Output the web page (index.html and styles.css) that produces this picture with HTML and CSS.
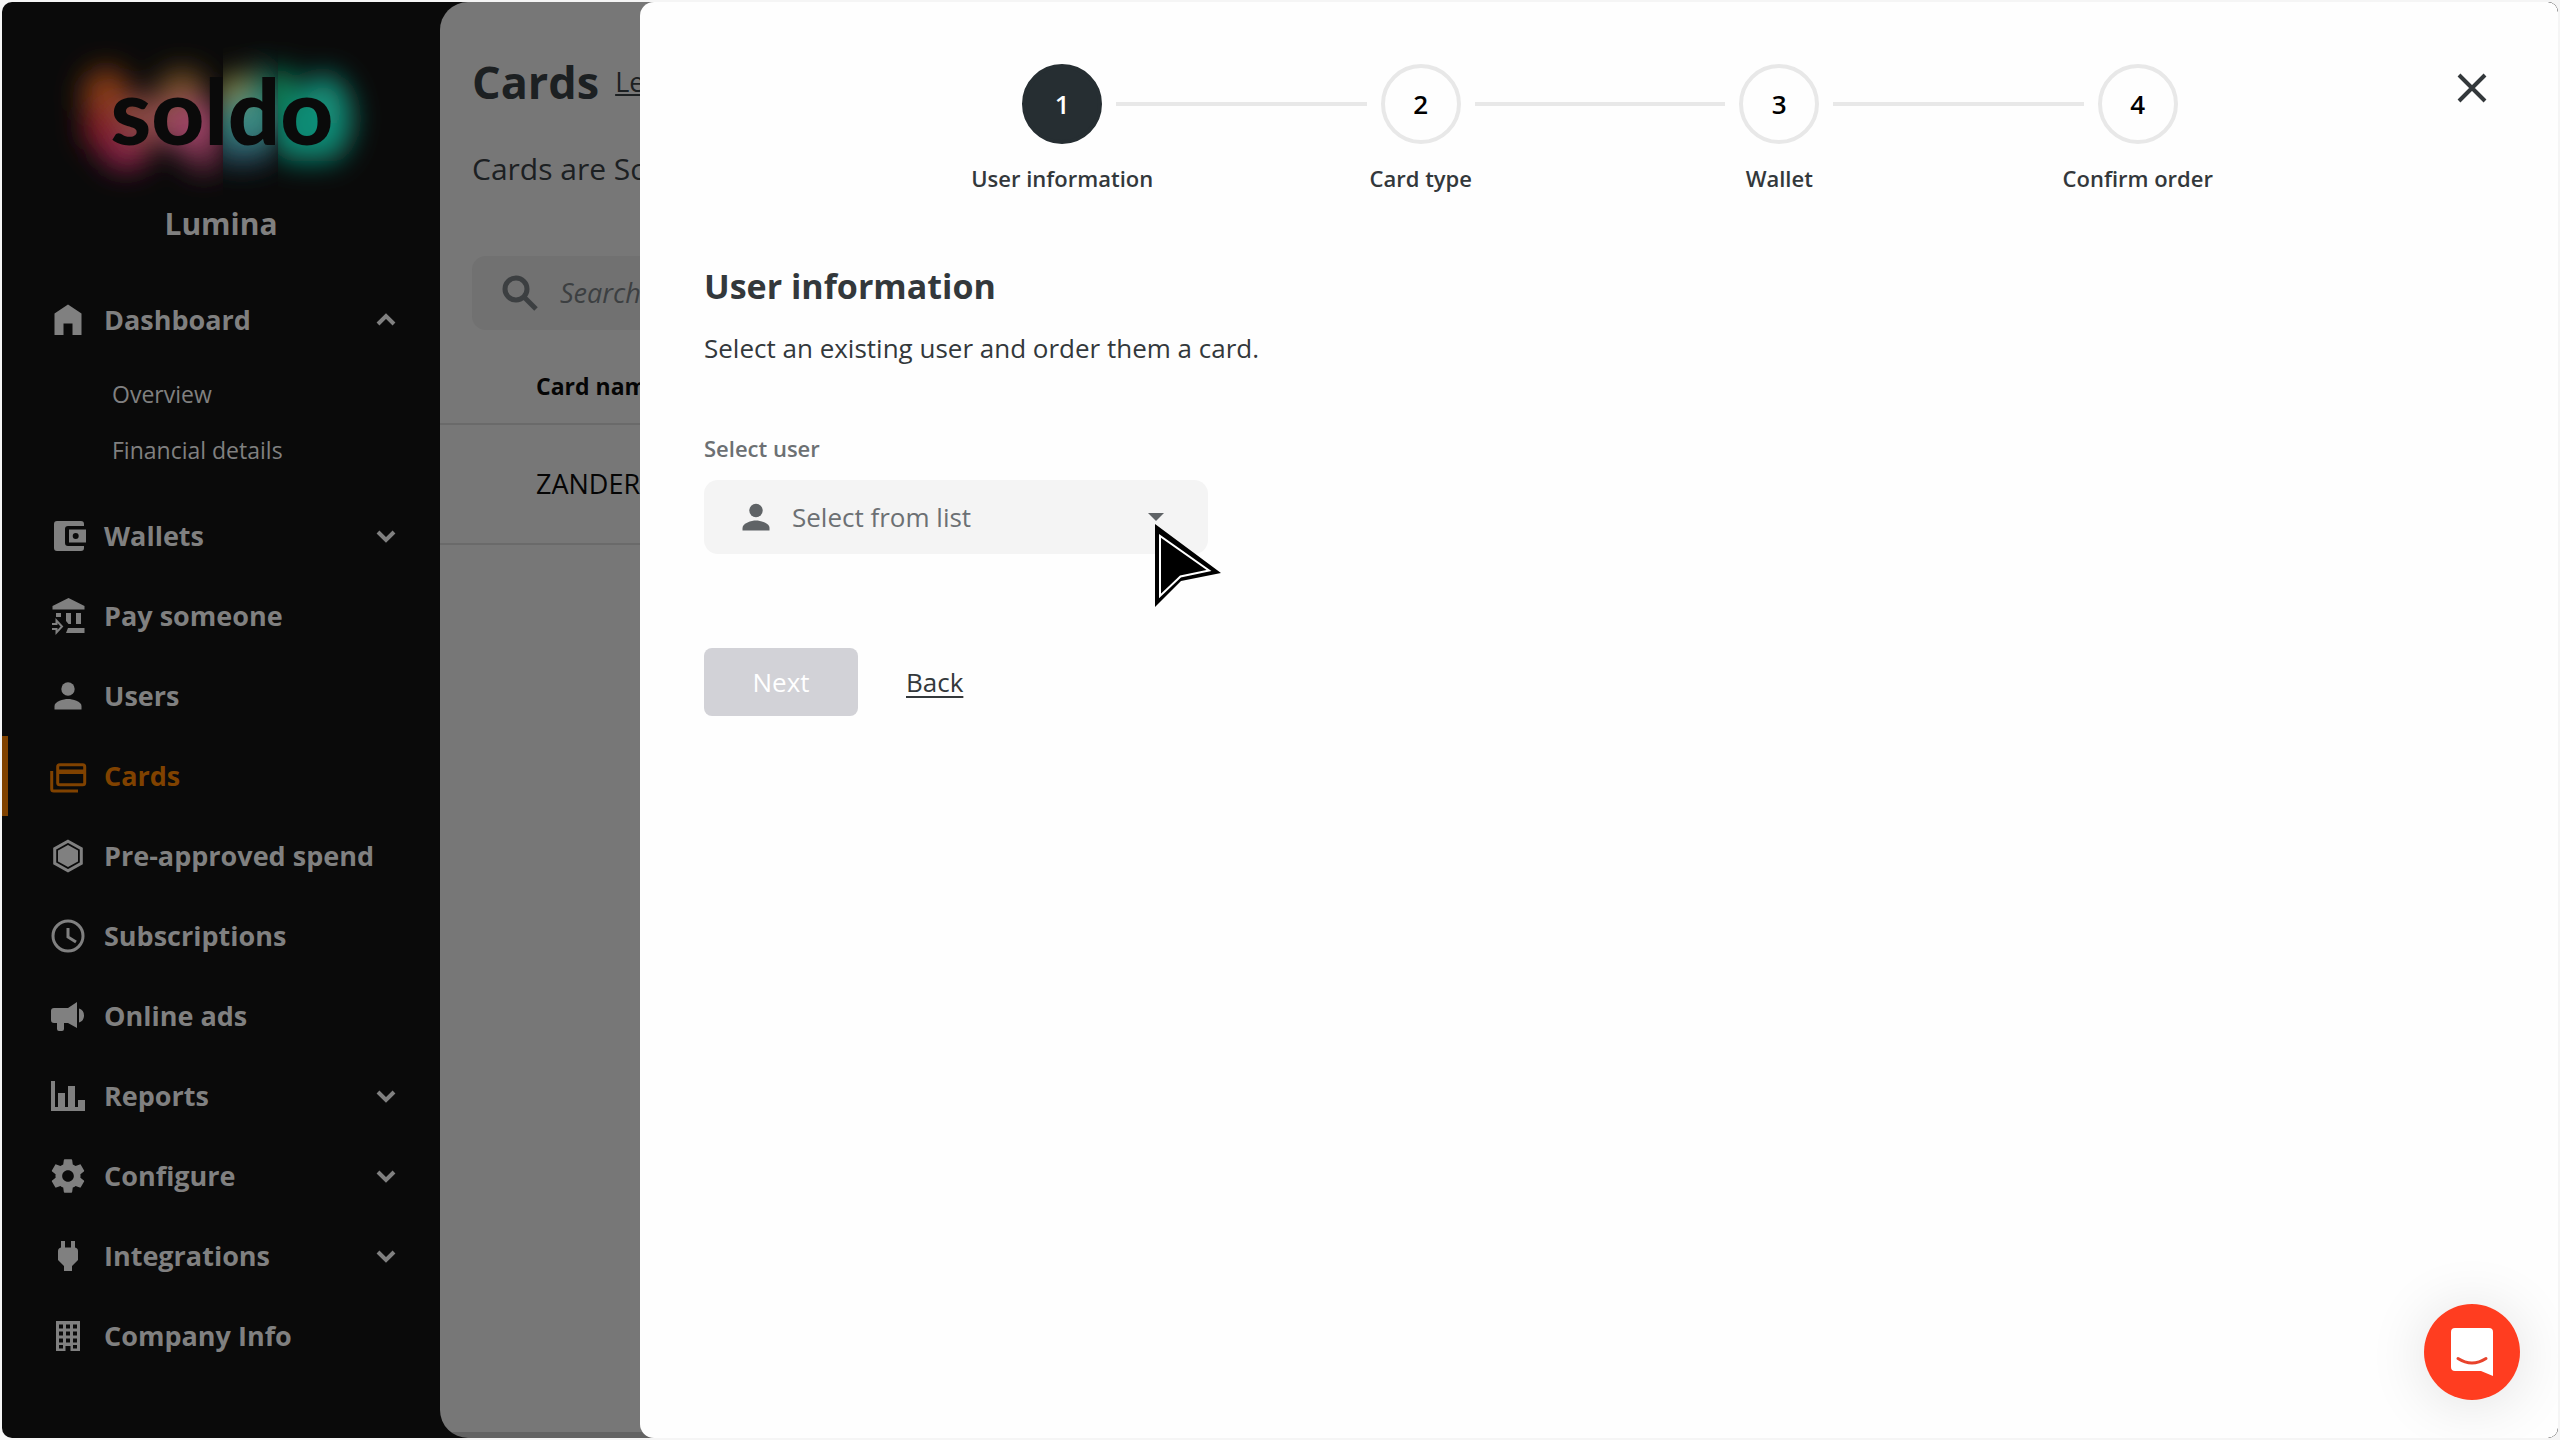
FILE: index.html
```
<!DOCTYPE html>
<html lang="en">
<head>
<meta charset="utf-8">
<title>Soldo – Cards</title>
<link rel="stylesheet" href="styles.css">
</head>
<body>
<div class="app">
  <aside class="sidebar">
    <svg class="logo" viewBox="0 0 438 200" role="img" aria-label="Soldo">
      <defs>
        <filter id="glow" x="-60%" y="-60%" width="220%" height="220%"><feGaussianBlur stdDeviation="14"/></filter>
        <clipPath id="left"><rect x="0" y="0" width="221" height="200"/></clipPath>
        <clipPath id="mid"><rect x="221" y="0" width="55" height="200"/></clipPath>
        <clipPath id="right"><rect x="276" y="0" width="162" height="200"/></clipPath>
      </defs>
      <g clip-path="url(#left)"><g filter="url(#glow)">
        <ellipse cx="104" cy="94" rx="24" ry="28" fill="#8a3c14"/>
        <ellipse cx="98" cy="126" rx="16" ry="22" fill="#8e1f2c"/>
        <ellipse cx="124" cy="150" rx="24" ry="18" fill="#8c2448"/>
        <ellipse cx="180" cy="88" rx="24" ry="20" fill="#7a5228"/>
        <ellipse cx="146" cy="118" rx="30" ry="24" fill="#8a4a44"/>
        <ellipse cx="192" cy="126" rx="28" ry="28" fill="#a04468"/>
        <ellipse cx="202" cy="154" rx="20" ry="16" fill="#6c2c44"/>
      </g></g>
      <g clip-path="url(#mid)"><g filter="url(#glow)">
        <ellipse cx="234" cy="94" rx="20" ry="22" fill="#8c8840"/>
        <ellipse cx="264" cy="98" rx="22" ry="34" fill="#127058"/>
        <ellipse cx="246" cy="120" rx="34" ry="24" fill="#3a8c84"/>
        <ellipse cx="240" cy="148" rx="34" ry="14" fill="#2c5468"/>
      </g></g>
      <g clip-path="url(#right)"><g filter="url(#glow)">
        <ellipse cx="276" cy="92" rx="22" ry="26" fill="#0c7c54"/>
        <ellipse cx="322" cy="116" rx="28" ry="44" fill="#12907a"/>
        <ellipse cx="298" cy="134" rx="30" ry="26" fill="#108a74"/>
      </g></g>
      <text class="logo-word" x="220" y="143" text-anchor="middle">soldo</text>
    </svg>
    <p class="company">Lumina</p>
    <nav class="nav" aria-label="Main">
      <a class="nav-item" href="#">
        <svg class="icon" viewBox="0 0 40 40"><path d="M6.500 13.500 20 4.500l13.500 9V35h-9V23.500h-9V35h-9z"/></svg>
        <span class="nav-text">Dashboard</span>
        <svg class="chevron" viewBox="0 0 20 20"><path d="M2 14 10 6l8 8"/></svg>
      </a>
      <div class="subnav">
        <a class="subnav-item" href="#">Overview</a>
        <a class="subnav-item" href="#">Financial details</a>
      </div>
      <a class="nav-item" href="#">
        <svg class="icon" viewBox="0 0 40 40"><path fill-rule="evenodd" d="M9 5h24q3 0 3 3v2H20q-3 0-3 3v14q0 3 3 3h16v2q0 3-3 3H9q-3 0-3-3V8q0-3 3-3zM21 13.500h17v13H21zm6.700 3.500a3 3 0 1 0 0 6 3 3 0 0 0 0-6z"/></svg>
        <span class="nav-text">Wallets</span>
        <svg class="chevron" viewBox="0 0 20 20"><path d="m2 6 8 8 8-8"/></svg>
      </a>
      <a class="nav-item" href="#">
        <svg class="icon" viewBox="0 0 40 40"><path d="M20.500 2 36.500 10v3.500H4.500V10zM8 17h5v4H8zM18 17h5v11h-2.500L18 25zM28 17h5v11h-5zM20 32h16.500v5H18z"/><path class="stroke thin" d="M4 28h4.500v-3.500l5.500 6-5.500 6V33H4"/></svg>
        <span class="nav-text">Pay someone</span>
      </a>
      <a class="nav-item" href="#">
        <svg class="icon" viewBox="0 0 40 40"><circle cx="20" cy="13" r="6.700"/><path d="M6.500 33.500v-3.500c0-4.800 9-7 13.500-7s13.500 2.200 13.500 7v3.500z"/></svg>
        <span class="nav-text">Users</span>
      </a>
      <a class="nav-item active" href="#" aria-current="page">
        <svg class="icon" viewBox="0 0 40 40"><rect class="stroke" x="9.700" y="8.700" width="27" height="20" rx="2"/><path d="M9 13.500h28v4.500H9z"/><path class="stroke" d="M3.700 15v18q0 2 2 2H30"/></svg>
        <span class="nav-text">Cards</span>
      </a>
      <a class="nav-item" href="#">
        <svg class="icon" viewBox="0 0 40 40"><path class="stroke" d="m20 5.300 13.300 7.400v14.600L20 34.700 6.700 27.300V12.700z"/><path d="m20 9 10 5.500v11L20 31l-10-5.500v-11z"/></svg>
        <span class="nav-text">Pre-approved spend</span>
      </a>
      <a class="nav-item" href="#">
        <svg class="icon" viewBox="0 0 40 40"><circle class="stroke" cx="20" cy="20" r="15"/><path class="stroke" d="M20 12v9l8 5"/></svg>
        <span class="nav-text">Subscriptions</span>
      </a>
      <a class="nav-item" href="#">
        <svg class="icon" viewBox="0 0 40 40"><path d="M6 12h14l9-6v26l-9-5h-4v6q0 2-2 2h-3q-2 0-2-2v-6H6q-3 0-3-3v-9q0-3 3-3zM31 12.500q5 1.500 5 7t-5 7z"/></svg>
        <span class="nav-text">Online ads</span>
      </a>
      <a class="nav-item" href="#">
        <svg class="icon" viewBox="0 0 40 40"><path d="M3 5h4v26h3V17h7v14h3V10h7v21h3v-7h7v11H3z"/></svg>
        <span class="nav-text">Reports</span>
        <svg class="chevron" viewBox="0 0 20 20"><path d="m2 6 8 8 8-8"/></svg>
      </a>
      <a class="nav-item" href="#">
        <svg class="icon" viewBox="0 0 24 24"><path d="M19.430 12.980c.04-.32.070-.64.070-.98s-.03-.66-.07-.98l2.110-1.650c.19-.15.240-.42.120-.64l-2-3.460c-.12-.22-.39-.3-.61-.22l-2.490 1c-.52-.4-1.080-.73-1.690-.98l-.38-2.650C14.460 2.180 14.250 2 14 2h-4c-.25 0-.46.180-.49.420l-.38 2.650c-.61.250-1.170.590-1.690.980l-2.490-1c-.23-.09-.49 0-.61.220l-2 3.460c-.13.220-.07.490.120.640l2.110 1.650c-.04.320-.07.650-.07.980s.03.660.07.980l-2.110 1.650c-.19.150-.24.420-.12.640l2 3.460c.12.220.39.300.61.220l2.490-1c.52.400 1.080.730 1.690.980l.38 2.650c.03.240.24.420.49.420h4c.25 0 .46-.18.490-.42l.38-2.650c.61-.25 1.170-.59 1.690-.98l2.490 1c.23.090.49 0 .61-.22l2-3.460c.12-.22.070-.49-.12-.64zM12 15.500c-1.930 0-3.500-1.570-3.500-3.500s1.570-3.500 3.500-3.500 3.500 1.570 3.500 3.500-1.570 3.500-3.500 3.500z"/></svg>
        <span class="nav-text">Configure</span>
        <svg class="chevron" viewBox="0 0 20 20"><path d="m2 6 8 8 8-8"/></svg>
      </a>
      <a class="nav-item" href="#">
        <svg class="icon" viewBox="0 0 40 40"><path d="M13 5h4v6.500h6V5h4v6.500q3 .5 3 3.500v9l-6 6v5h-8v-5l-6-6v-9q0-3 3-3.500z"/></svg>
        <span class="nav-text">Integrations</span>
        <svg class="chevron" viewBox="0 0 20 20"><path d="m2 6 8 8 8-8"/></svg>
      </a>
      <a class="nav-item" href="#">
        <svg class="icon" viewBox="0 0 40 40"><path fill-rule="evenodd" d="M8 5h24v30h-9.500v-5h-5v5H8zM11 8.500v4h4v-4zm7 0v4h4v-4zm7 0v4h4v-4zM11 15.500v4h4v-4zm7 0v4h4v-4zm7 0v4h4v-4zM11 22.500v4h4v-4zm7 0v4h4v-4zm7 0v4h4v-4zM11 29v3.500h4V29zm14 0v3.500h4V29z"/></svg>
        <span class="nav-text">Company Info</span>
      </a>
    </nav>
  </aside>

  <main class="page">
    <header class="page-head">
      <h1 class="page-title">Cards</h1>
      <a class="learn" href="#">Learn more</a>
    </header>
    <p class="page-intro">Cards are Soldo Mastercards</p>
    <label class="search">
      <svg class="search-icon" viewBox="0 0 36 36"><circle cx="14" cy="14" r="11"/><path d="m22 22 12 12"/></svg>
      <input class="search-input" type="search" placeholder="Search..." aria-label="Search cards">
    </label>
    <table class="cards">
      <thead><tr><th>Card name</th></tr></thead>
      <tbody><tr><td>ZANDER</td></tr></tbody>
    </table>
  </main>

  <section class="drawer" role="dialog" aria-labelledby="drawer-title">
    <div class="drawer-top">
      <ol class="stepper">
        <li class="step current"><span class="step-row"><span class="step-dot">1</span></span><span class="step-label">User information</span></li>
        <li class="step"><span class="step-row"><span class="step-dot">2</span></span><span class="step-label">Card type</span></li>
        <li class="step"><span class="step-row"><span class="step-dot">3</span></span><span class="step-label">Wallet</span></li>
        <li class="step"><span class="step-row"><span class="step-dot">4</span></span><span class="step-label">Confirm order</span></li>
      </ol>
      <button class="close" type="button" aria-label="Close"><svg viewBox="0 0 30 30"><path d="m2 2 26 26M28 2 2 28"/></svg></button>
    </div>
    <form class="form">
      <h2 class="form-title" id="drawer-title">User information</h2>
      <p class="form-text">Select an existing user and order them a card.</p>
      <label class="form-label" for="user">Select user</label>
      <div class="picker">
        <svg class="picker-icon" viewBox="0 0 28 28"><circle cx="14" cy="7.500" r="6.700"/><path d="M.5 27.500V25c0-5 9-7.500 13.500-7.500S27.500 20 27.500 25v2.500z"/></svg>
        <select class="picker-select" id="user"><option>Select from list</option></select>
        <svg class="picker-caret" viewBox="0 0 16 8"><path d="M0 0h16L8 8z"/></svg>
        <svg class="pointer" viewBox="0 0 68 86"><path d="M1 0v83l26-26 40-8z"/><path class="pointer-rim" d="M6 12v60l20.500-19.500L55 46.500z"/></svg>
      </div>
      <div class="actions">
        <button class="next" type="button" disabled>Next</button>
        <a class="back" href="#">Back</a>
      </div>
    </form>
    <button class="chat" type="button" aria-label="Open chat">
      <svg viewBox="0 0 42 48"><path d="M4 0h34q4 0 4 4v44l-12-5H4q-4 0-4-4V4q0-4 4-4z"/><path class="smile" d="M7 30.500q14 9 28 0"/></svg>
    </button>
  </section>
</div>
</body>
</html>
```
FILE: styles.css
```
:root {
  --ink: #0a0a0a;
  --muted: #808080;
  --page: #777;
  --accent: #804200;
}

* { box-sizing: border-box; }

body {
  margin: 0;
  padding: 2px;
  background: #f5f5f5;
  font-family: "Open Sans", "Noto Sans", sans-serif;
  font-size: 27px;
  line-height: 40px;
}

h1, h2, p, ol { margin: 0; padding: 0; }
a { color: inherit; }
button, input, select { font: inherit; color: inherit; }

.app {
  position: relative;
  display: grid;
  grid-template-columns: 438px 1fr;
  min-height: calc(100vh - 4px);
  border-radius: 10px;
  overflow: hidden;
  background: var(--ink);
}

/* Sidebar */
.sidebar { color: var(--muted); }
.logo { display: block; width: 100%; height: 200px; }
.logo-word { font-family: Lato, sans-serif; font-weight: 900; font-size: 92px; fill: var(--ink); }
.company {
  margin-bottom: 34px;
  text-align: center;
  font-size: 30px;
  line-height: 44px;
  font-weight: 700;
}
.nav-item {
  display: flex;
  align-items: center;
  gap: 16px;
  height: 80px;
  padding: 0 44px 0 46px;
  font-weight: 700;
  text-decoration: none;
}
.nav-text { flex: 1; white-space: nowrap; }
.icon { width: 40px; height: 40px; fill: currentColor; }
.stroke { fill: none; stroke: currentColor; stroke-width: 3; }
.thin { stroke-width: 2; }
.chevron { width: 20px; height: 20px; fill: none; stroke: currentColor; stroke-width: 4; }
.active {
  color: var(--accent);
  background: linear-gradient(var(--accent), var(--accent)) left / 6px 100% no-repeat;
}
.subnav { padding: 6px 0 18px 110px; font-size: 23px; }
.subnav-item { display: block; line-height: 56px; text-decoration: none; }

/* Cards page behind the drawer */
.page {
  padding-top: 48px;
  border-radius: 28px;
  background: linear-gradient(#636363, #636363) bottom / 100% 6px no-repeat var(--page);
  color: #1c2022;
}
.page-head { display: flex; align-items: center; gap: 16px; padding-left: 32px; }
.page-title { font-size: 45px; line-height: 64px; font-weight: 700; }
.page-intro { padding-left: 32px; margin: 32px 0 64px; font-size: 30px; line-height: 46px; }
.search {
  display: flex;
  align-items: center;
  gap: 22px;
  height: 74px;
  margin-left: 32px;
  padding-left: 30px;
  border-radius: 14px;
  background: #717171;
  color: #3c3f41;
}
.search-icon { width: 36px; height: 36px; fill: none; stroke: currentColor; stroke-width: 5; }
.search-input { flex: 1; border: 0; padding: 0; background: none; font-style: italic; }
.search-input::placeholder { color: inherit; opacity: 1; }
.cards { width: 100%; border-collapse: collapse; color: #050505; }
.cards th, .cards td {
  padding: 0 96px;
  border-bottom: 2px solid #6a6a6a;
  text-align: left;
}
.cards th { height: 94px; padding-top: 18px; font-size: 23px; font-weight: 700; }
.cards td { height: 120px; }

/* Drawer */
.drawer {
  position: absolute;
  inset: 0 0 0 auto;
  width: calc(75% + 1px);
  border-radius: 14px 10px 10px 14px;
  background: #fefefe;
  color: #33383b;
}
.drawer-top { padding: 62px 241px 0 243px; }
.stepper { display: grid; grid-template-columns: repeat(4, 1fr); list-style: none; }
.step { display: grid; gap: 16px; text-align: center; font-size: 22px; line-height: 36px; font-weight: 600; }
.step-row { display: flex; align-items: center; gap: 14px; }
.step-row::before, .step-row::after { content: ""; flex: 1; height: 4px; background: #e8e8e8; }
.step:first-child .step-row::before, .step:last-child .step-row::after { background: none; }
.step-dot {
  width: 80px;
  height: 80px;
  border: 4px solid #e8e8e8;
  border-radius: 50%;
  line-height: 72px;
  font-size: 26px;
  color: #000;
}
.current .step-dot { border-color: #262e32; background: #262e32; color: #fff; }
.close {
  position: absolute;
  top: 71px;
  right: 71px;
  width: 30px;
  height: 30px;
  padding: 0;
  border: 0;
  background: none;
}
.close svg { display: block; fill: none; stroke: #33383b; stroke-width: 4; }

.form { padding: 64px; font-size: 26px; }
.form-title { font-size: 34px; line-height: 52px; font-weight: 700; }
.form-text { margin: 16px 0 60px; }
.form-label { display: block; font-size: 22px; line-height: 40px; font-weight: 600; color: #6c7073; }
.picker {
  position: relative;
  display: flex;
  align-items: center;
  width: 504px;
  height: 74px;
  margin: 12px 0 94px;
  padding: 0 44px 0 38px;
  border-radius: 14px;
  background: #f4f4f4;
  color: #6c7073;
}
.picker-icon { width: 28px; height: 28px; fill: #5f6366; }
.picker-select { flex: 1; appearance: none; margin-left: 22px; padding: 0; border: 0; background: none; }
.picker-caret { width: 16px; height: 8px; fill: #5f6366; }
.pointer { position: absolute; left: 450px; top: 44px; width: 68px; height: 86px; fill: #000; }
.pointer-rim { stroke: #fff; stroke-width: 2; }
.actions { display: flex; align-items: center; gap: 48px; }
.next { width: 154px; height: 68px; border: 0; border-radius: 8px; background: #d2d2d7; color: #fff; }
.back { color: #33383b; text-underline-offset: 4px; }

.chat {
  position: absolute;
  right: 38px;
  bottom: 38px;
  display: grid;
  place-items: center;
  width: 96px;
  height: 96px;
  padding: 0;
  border: 0;
  border-radius: 50%;
  background: #ff3d20;
  box-shadow: 0 4px 60px rgba(0, 0, 0, .12);
}
.chat svg { width: 42px; height: 48px; fill: #fff; }
.chat .smile { fill: none; stroke: #e8432c; stroke-width: 3; stroke-linecap: round; }
```
